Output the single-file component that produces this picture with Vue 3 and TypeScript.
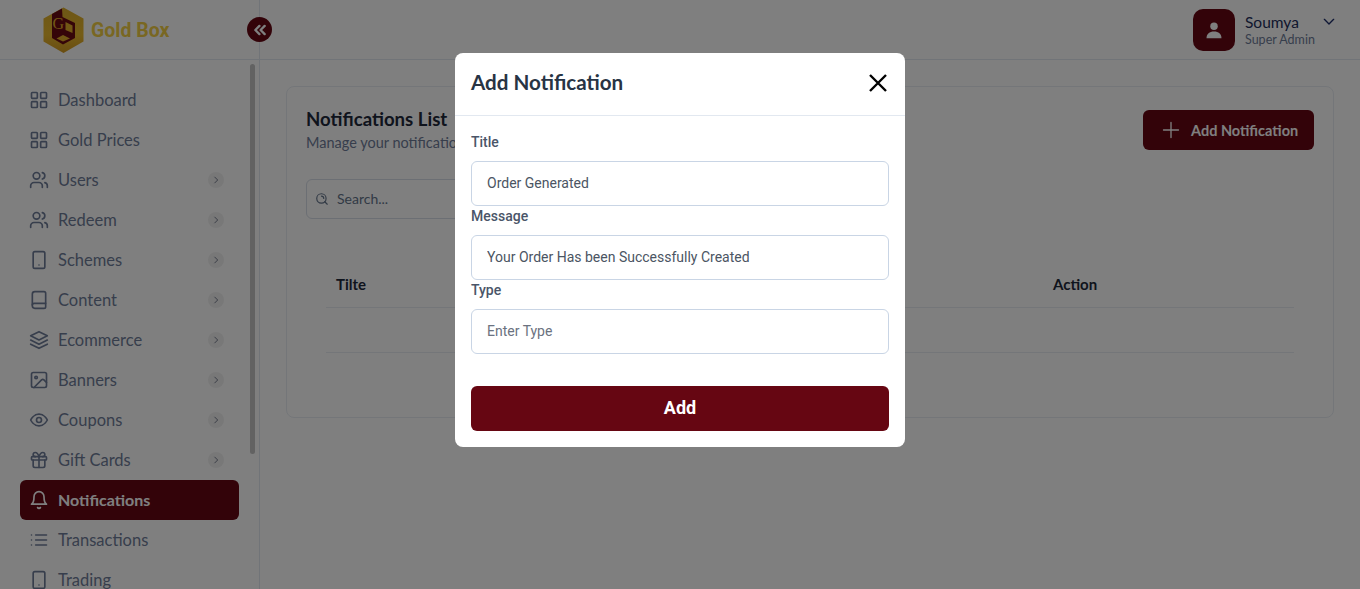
<template>
  <div class="shell">
    <aside class="sidebar">
      <div class="brand">
        <svg class="logo" width="42" height="46" viewBox="0 0 42 46">
          <defs>
            <linearGradient id="gold" x1="0" y1="0" x2="0" y2="1">
              <stop offset="0" stop-color="#dcae2c" />
              <stop offset="0.6" stop-color="#eab92e" />
              <stop offset="1" stop-color="#d39a22" />
            </linearGradient>
          </defs>
          <path class="hex" d="M20.5 0.5 40.5 11.5V34.5L20.5 46 0.5 34.5V11.5Z" />
          <path class="dark" d="M9 7 19 1.5 19.5 10 32 16V31L20 37.5 9 31Z" />
          <path class="light" d="M22.5 15 29.5 18.5V26L22.5 23Z" />
          <path class="light" d="M13.5 31.5 20 28 27 31.5 20 34.5Z" />
          <text class="logo-g" x="9.5" y="22" font-size="16">G</text>
        </svg>
        <span class="brand-name">Gold Box</span>
      </div>
      <nav class="menu">
        <a v-for="item in menu" :key="item.label" class="menu-item" :class="{ active: item.label === 'Notifications' }">
          <svg class="menu-icon" width="20" height="20" viewBox="0 0 24 24">
            <path v-for="d in icons[item.icon]" :key="d" :d="d" />
          </svg>
          <span class="menu-label">{{ item.label }}</span>
          <span v-if="item.more" class="more">
            <svg width="10" height="10" viewBox="0 0 24 24"><path d="m9 5 7 7-7 7" /></svg>
          </span>
        </a>
      </nav>
      <div class="thumb"></div>
    </aside>

    <button class="collapse" aria-label="Collapse">
      <svg width="14" height="14" viewBox="0 0 24 24"><path d="m11 5-7 7 7 7M20 5l-7 7 7 7" /></svg>
    </button>

    <div class="main">
      <header class="topbar">
        <div class="avatar">
          <svg width="18" height="18" viewBox="0 0 24 24">
            <circle cx="12" cy="7" r="5" />
            <path d="M2 23c0-6 4-9 10-9s10 3 10 9z" />
          </svg>
        </div>
        <div class="who">
          <div class="who-name">Soumya</div>
          <div class="who-role">Super Admin</div>
        </div>
        <svg class="caret" width="16" height="16" viewBox="0 0 24 24"><path d="m5 8 7 7 7-7" /></svg>
      </header>

      <section class="card">
        <div class="card-head">
          <div>
            <h2>Notifications List</h2>
            <p>Manage your notifications</p>
          </div>
          <button class="add-btn">
            <svg width="20" height="20" viewBox="0 0 24 24"><path d="M12 3v18M3 12h18" /></svg>
            Add Notification
          </button>
        </div>
        <label class="search">
          <svg width="14" height="14" viewBox="0 0 24 24">
            <circle cx="11" cy="11" r="8" />
            <path d="m21 21-4.3-4.3M11 7a4 4 0 0 1 4 4" />
          </svg>
          <input placeholder="Search..." />
        </label>
        <div class="table">
          <div class="row head">
            <span>Tilte</span>
            <span>Message</span>
            <span>Type</span>
            <span>Action</span>
          </div>
          <div class="row empty"></div>
        </div>
      </section>
    </div>

    <div class="overlay">
      <div class="modal">
        <div class="modal-head">
          <h3>Add Notification</h3>
          <button class="close" aria-label="Close">
            <svg width="24" height="24" viewBox="0 0 24 24"><path d="M4 4l16 16M20 4 4 20" /></svg>
          </button>
        </div>
        <form class="modal-body" @submit.prevent>
          <div v-for="f in fields" :key="f.label" class="field">
            <label>{{ f.label }}</label>
            <input v-model="f.value" :placeholder="f.placeholder" />
          </div>
          <button class="submit">Add</button>
        </form>
      </div>
    </div>
  </div>
</template>

<script setup lang="ts">
import { reactive } from 'vue'

// rounded square used four times by the grid icon
const sq = (x: number, y: number) =>
  `M${x + 1} ${y}h5a1 1 0 0 1 1 1v5a1 1 0 0 1-1 1h-5a1 1 0 0 1-1-1v-5a1 1 0 0 1 1-1z`

const phone = [
  'M7 2h10a2 2 0 0 1 2 2v16a2 2 0 0 1-2 2H7a2 2 0 0 1-2-2V4a2 2 0 0 1 2-2z',
  'M12 18h.01',
]
const users = [
  'M16 21v-2a4 4 0 0 0-4-4H6a4 4 0 0 0-4 4v2',
  'M13 7a4 4 0 1 1-8 0 4 4 0 0 1 8 0z',
  'M22 21v-2a4 4 0 0 0-3-3.87',
  'M16 3.13a4 4 0 0 1 0 7.75',
]

const icons: Record<string, string[]> = {
  grid: [sq(3, 3), sq(14, 3), sq(3, 14), sq(14, 14)],
  users,
  phone,
  book: [
    'M4 19V5a3 3 0 0 1 3-3h11a2 2 0 0 1 2 2v16a2 2 0 0 1-2 2H7a3 3 0 0 1-3-3z',
    'M4 18a2 2 0 0 1 2-2h14',
  ],
  layers: ['M12 2 2 7l10 5 10-5-10-5z', 'M2 17l10 5 10-5', 'M2 12l10 5 10-5'],
  image: [
    'M5 3h14a2 2 0 0 1 2 2v14a2 2 0 0 1-2 2H5a2 2 0 0 1-2-2V5a2 2 0 0 1 2-2z',
    'M10 9a1.5 1.5 0 1 1-3 0 1.5 1.5 0 0 1 3 0z',
    'm21 15-3.086-3.086a2 2 0 0 0-2.828 0L6 21',
  ],
  eye: [
    'M2 12s3.5-7 10-7 10 7 10 7-3.5 7-10 7-10-7-10-7z',
    'M15 12a3 3 0 1 1-6 0 3 3 0 0 1 6 0z',
  ],
  gift: [
    'M4 8h16a1 1 0 0 1 1 1v2a1 1 0 0 1-1 1H4a1 1 0 0 1-1-1V9a1 1 0 0 1 1-1z',
    'M12 8v13',
    'M19 12v7a2 2 0 0 1-2 2H7a2 2 0 0 1-2-2v-7',
    'M7.5 8a2.5 2.5 0 0 1 0-5C10.5 3 12 8 12 8s1.5-5 4.5-5a2.5 2.5 0 0 1 0 5',
  ],
  bell: ['M6 8a6 6 0 0 1 12 0c0 7 3 9 3 9H3s3-2 3-9', 'M10.3 21a1.94 1.94 0 0 0 3.4 0'],
  list: ['M8 6h13M8 12h13M8 18h13M3 6h.01M3 12h.01M3 18h.01'],
}

const menu = [
  { label: 'Dashboard', icon: 'grid', more: false },
  { label: 'Gold Prices', icon: 'grid', more: false },
  { label: 'Users', icon: 'users', more: true },
  { label: 'Redeem', icon: 'users', more: true },
  { label: 'Schemes', icon: 'phone', more: true },
  { label: 'Content', icon: 'book', more: true },
  { label: 'Ecommerce', icon: 'layers', more: true },
  { label: 'Banners', icon: 'image', more: true },
  { label: 'Coupons', icon: 'eye', more: true },
  { label: 'Gift Cards', icon: 'gift', more: true },
  { label: 'Notifications', icon: 'bell', more: false },
  { label: 'Transactions', icon: 'list', more: false },
  { label: 'Trading', icon: 'phone', more: false },
]

const fields = reactive([
  { label: 'Title', value: 'Order Generated', placeholder: 'Enter Title' },
  { label: 'Message', value: 'Your Order Has been Successfully Created', placeholder: 'Enter Message' },
  { label: 'Type', value: '', placeholder: 'Enter Type' },
])
</script>

<style>
html,
body {
  margin: 0;
  height: 100%;
  overflow: hidden;
  background: #fff;
}
</style>

<style scoped>
.shell {
  position: relative;
  display: flex;
  height: 589px;
  overflow: hidden;
  font-family: Lato, "Noto Sans", sans-serif;
  color: #1e293b;
}

svg path,
svg circle {
  fill: none;
  stroke: currentColor;
  stroke-width: 2;
  stroke-linecap: round;
  stroke-linejoin: round;
}

.sidebar {
  position: relative;
  flex: 0 0 260px;
  box-sizing: border-box;
  border-right: 1px solid #e2e8f0;
  overflow: hidden;
}

.brand {
  display: flex;
  align-items: center;
  gap: 6px;
  height: 60px;
  box-sizing: border-box;
  padding-left: 43px;
  border-bottom: 1px solid #e2e8f0;
}

.logo path {
  stroke: none;
}

.logo .hex {
  fill: url(#gold);
}

.logo .dark {
  fill: #6b0a12;
}

.logo .light {
  fill: #e2ae2a;
}

.logo-g {
  fill: #e2ae2a;
  font-family: "Liberation Serif", serif;
}

.brand-name {
  padding-top: 2px;
  font-family: Roboto, sans-serif;
  font-size: 19.5px;
  font-weight: 700;
  color: #f2cf45;
}

.menu {
  display: flex;
  flex-direction: column;
  padding: 20px 20px 0;
}

.menu-item {
  display: flex;
  align-items: center;
  flex: 0 0 40px;
  width: 219px;
  box-sizing: border-box;
  padding: 0 15px 0 9px;
  border-radius: 6px;
  font-size: 16.5px;
  color: #6f7d99;
}

.menu-item.active {
  background: #660612;
  color: #fff;
  font-size: 16px;
  font-weight: 700;
}

.menu-item.active .menu-label {
  padding-bottom: 2px;
}

.menu-icon {
  margin-right: 9px;
  flex: none;
}

.menu-label {
  flex: 1;
}

.more {
  display: flex;
  align-items: center;
  justify-content: center;
  width: 16px;
  height: 16px;
  border-radius: 50%;
  background: #f1f1f1;
  color: #5a6478;
}

.thumb {
  position: absolute;
  top: 64px;
  left: 250px;
  width: 5px;
  height: 390px;
  border-radius: 3px;
  background: #c4c4c4;
}

.collapse {
  position: absolute;
  top: 17px;
  left: 247px;
  z-index: 2;
  display: flex;
  align-items: center;
  justify-content: center;
  width: 25px;
  height: 25px;
  padding: 0;
  border: 0;
  border-radius: 50%;
  background: #660612;
  color: #fff;
}

.collapse path {
  stroke-width: 4;
}

.main {
  flex: 1;
  min-width: 0;
}

.topbar {
  display: flex;
  align-items: center;
  justify-content: flex-end;
  height: 60px;
  box-sizing: border-box;
  padding-right: 23px;
  border-bottom: 1px solid #e2e8f0;
}

.avatar {
  display: flex;
  align-items: center;
  justify-content: center;
  width: 42px;
  height: 42px;
  border-radius: 10px;
  background: #660612;
  color: #fff;
}

.avatar path,
.avatar circle {
  fill: currentColor;
  stroke: none;
}

.who {
  width: 76px;
  margin-left: 10px;
}

.who-name {
  font-size: 15.5px;
  line-height: 20px;
  color: #1e2f5c;
}

.who-role {
  font-size: 12.5px;
  line-height: 16px;
  color: #6f7d99;
}

.caret {
  margin-left: 0;
  margin-bottom: 16px;
  color: #1e2f6b;
}

.card {
  box-sizing: border-box;
  height: 332px;
  margin: 26px 26px 0;
  padding: 23px 19px;
  border: 1px solid #e8edf3;
  border-radius: 8px;
}

.card-head {
  display: flex;
  justify-content: space-between;
}

h2 {
  margin: 0;
  font-size: 18.6px;
  line-height: 18px;
  font-weight: 700;
  color: #1e293b;
}

.card-head p {
  margin: 5px 0 0;
  font-size: 14.5px;
  line-height: 20px;
  color: #6f7d99;
}

.add-btn {
  display: flex;
  align-items: center;
  gap: 10px;
  box-sizing: border-box;
  width: 171px;
  height: 40px;
  padding: 0 0 0 18px;
  border: 0;
  border-radius: 6px;
  background: #660612;
  color: #fff;
  font: 700 14.5px Lato, sans-serif;
}

.add-btn path {
  stroke-width: 1.6;
}

.search {
  display: flex;
  align-items: center;
  gap: 6px;
  box-sizing: border-box;
  width: 300px;
  height: 40px;
  margin-top: 26px;
  padding-left: 8px;
  border: 1px solid #d8dee8;
  border-radius: 6px;
  color: #64748b;
}

.search input {
  flex: 1;
  min-width: 0;
  padding-bottom: 3px;
  border: 0;
  outline: 0;
  background: none;
  font: 14px Lato, sans-serif;
}

.search input::placeholder {
  color: #64748b;
  opacity: 1;
}

.table {
  margin: 44px 20px 0;
}

.row {
  display: grid;
  grid-template-columns: 240px 240px 237px 1fr;
  align-items: center;
  padding-left: 10px;
  border-bottom: 1px solid #e8edf3;
}

.row.head {
  box-sizing: content-box;
  height: 42px;
  padding-bottom: 2px;
  font-size: 15px;
  font-weight: 700;
  color: #1e293b;
}

.row.empty {
  height: 44px;
}

.overlay {
  position: absolute;
  inset: 0;
  z-index: 5;
  display: flex;
  justify-content: center;
  align-items: flex-start;
  padding-top: 53px;
  background: rgba(0, 0, 0, 0.5);
}

.modal {
  width: 450px;
  height: 394px;
  border-radius: 8px;
  background: #fff;
}

.modal-head {
  display: flex;
  align-items: center;
  justify-content: space-between;
  height: 63px;
  box-sizing: border-box;
  padding: 0 15px 2px 16px;
  border-bottom: 1px solid #e2e8f0;
}

h3 {
  margin: 0 0 2px;
  font-size: 20.6px;
  font-weight: 700;
  color: #283444;
}

.close {
  display: flex;
  padding: 0;
  border: 0;
  background: none;
  color: #000;
}

.close path {
  stroke-width: 2.4;
  stroke-linecap: butt;
}

.modal-body {
  display: flex;
  flex-direction: column;
  padding: 16px 16px 0;
  font-family: Roboto, sans-serif;
}

.field label {
  display: block;
  height: 20px;
  margin-bottom: 9px;
  font-size: 14px;
  line-height: 20px;
  font-weight: 500;
  color: #4a5568;
}

.field input {
  display: block;
  width: 100%;
  height: 45px;
  box-sizing: border-box;
  padding: 0 15px 2px;
  border: 1px solid #c9d5e5;
  border-radius: 6px;
  outline: 0;
  font: 14px Roboto, sans-serif;
  color: #4b5563;
}

.field input::placeholder {
  color: #6b7280;
  opacity: 1;
}

.submit {
  height: 45px;
  margin-top: 32px;
  padding-bottom: 3px;
  border: 0;
  border-radius: 6px;
  background: #660612;
  color: #fff;
  font: 700 18px Roboto, sans-serif;
}
</style>
